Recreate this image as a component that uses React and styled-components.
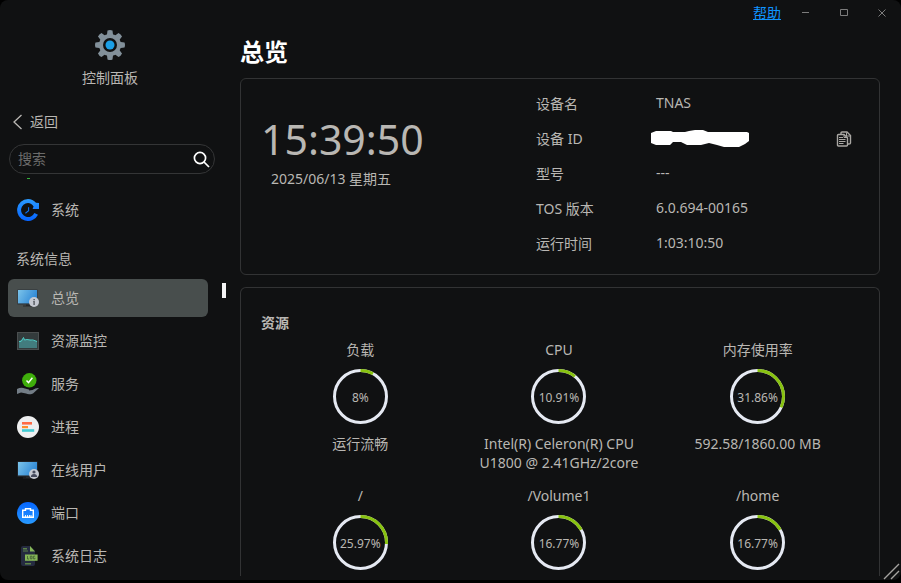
import React, { useState } from "react";
import styled, { createGlobalStyle } from "styled-components";

const GlobalStyle = createGlobalStyle`
  * {
    box-sizing: border-box;
  }
  body {
    margin: 0;
    background-color: #000;
    color: #b9b7b3;
    font-family: "Noto Sans", "Noto Sans CJK SC", sans-serif;
    font-size: 14px;
    line-height: 20px;
    overflow: hidden;
  }
  button, input {
    font: inherit;
    color: inherit;
    background: none;
    border: 0;
    padding: 0;
  }
  button {
    cursor: pointer;
  }
`;

const Window = styled.div`
  display: grid;
  grid-template-columns: 240px minmax(0, 1fr);
  height: calc(100vh - 3px);
  background-color: #101112;
  border-radius: 8px;
  overflow: hidden;
  position: relative;
`;

const Sidebar = styled.aside`
  display: flex;
  flex-direction: column;
  min-height: 0;
  padding: 30px 14px 0 8px;
`;

const AppHead = styled.div`
  display: flex;
  flex-direction: column;
  align-items: center;
  gap: 8px;
  width: 204px;
`;

const Back = styled.button`
  display: flex;
  align-items: center;
  gap: 8px;
  align-self: flex-start;
  margin: 24px 0 12px 5px;
`;

const Search = styled.label`
  display: flex;
  align-items: center;
  flex: none;
  width: 206px;
  height: 30px;
  margin-left: 1px;
  padding: 0 4px 0 8px;
  border: 1px solid #343536;
  border-radius: 15px;
  input {
    flex: 1;
    min-width: 0;
    outline: none;
  }
  input::placeholder {
    color: #6b6b6a;
    opacity: 1;
  }
`;

const NavScroll = styled.div`
  display: flex;
  justify-content: space-between;
  flex: 1;
  min-height: 0;
  margin-top: 4px;
  overflow: hidden;
`;

const Nav = styled.nav`
  display: flex;
  flex-direction: column;
  gap: 5px;
  width: 200px;
`;

const Clipped = styled.div`
  flex: none;
  width: 3px;
  height: 1px;
  margin: 0 0 7px 19px;
  background-color: #35b13c;
`;

const NavItem = styled.button`
  display: flex;
  align-items: center;
  flex: none;
  gap: 12px;
  height: 38px;
  padding-left: 9px;
  border-radius: 6px;
  background-color: ${({ $active }) => ($active ? "#484e4d" : "transparent")};
  svg {
    flex: none;
  }
`;

const NavTitle = styled.div`
  flex: none;
  padding: 15px 8px 5px;
`;

const Thumb = styled.div`
  width: 4px;
  height: 15px;
  margin-top: 105px;
  background-color: #f4f4f4;
`;

const Main = styled.main`
  display: flex;
  flex-direction: column;
  min-width: 0;
  min-height: 0;
  padding: 0 21px 4px 0;
`;

const TitleBar = styled.header`
  display: flex;
  align-items: center;
  justify-content: flex-end;
  flex: none;
  gap: 18px;
  height: 26px;
  margin-right: -9px;
  a {
    color: #0f94ff;
  }
`;

const WinButtons = styled.div`
  display: flex;
  gap: 24px;
`;

const WinButton = styled.button`
  display: grid;
  place-items: center;
  width: 14px;
  height: 14px;
  color: #7c7c7c;
`;

const PageTitle = styled.h1`
  margin: 8px 0;
  color: #fff;
  font-size: 24px;
  line-height: 36px;
  font-weight: 700;
`;

const Card = styled.section`
  border: 1px solid #323334;
  border-radius: 6px;
`;

const Device = styled(Card)`
  display: grid;
  grid-template-columns: 295fr 343fr;
  flex: none;
  margin-bottom: 12px;
  padding: 14px 0 20px;
`;

const Clock = styled.div`
  padding: 18px 0 0 20px;
  time {
    display: block;
    font-size: 41px;
    line-height: 56px;
  }
  p {
    margin: 0;
    padding: 2px 0 0 10px;
  }
`;

const Info = styled.dl`
  display: grid;
  grid-template-columns: 120px 1fr;
  row-gap: 15px;
  margin: 0;
  padding-top: 1px;
  dd {
    display: flex;
    align-items: center;
    justify-content: space-between;
    height: 18px;
    margin: 0;
    padding-right: 27px;
  }
`;

const CopyButton = styled.button`
  display: grid;
  place-items: center;
  padding-top: 2px;
`;

const Hidden = styled.svg`
  margin-left: -5px;
`;

const Resources = styled(Card)`
  flex: 1;
  min-height: 0;
  overflow: hidden;
  border-bottom: 0;
  border-radius: 6px 6px 0 0;
  padding: 25px 22px 0 20px;
  h2 {
    margin: 0 0 7px;
    font-size: 14px;
    line-height: 20px;
    font-weight: 700;
  }
`;

const Gauges = styled.div`
  display: grid;
  grid-template-columns: repeat(3, minmax(0, 1fr));
  row-gap: 14px;
`;

const GaugeCell = styled.div`
  display: flex;
  flex-direction: column;
  align-items: center;
  text-align: center;
  p {
    margin: 0;
    max-width: 170px;
    min-height: 38px;
    line-height: 19px;
  }
`;

const Ring = styled.div`
  display: grid;
  place-items: center;
  margin: 9px 0 10px;
  > * {
    grid-area: 1 / 1;
  }
  span {
    font-size: 12px;
    line-height: 16px;
    padding-top: 2px;
  }
`;

const Grip = styled.svg`
  position: absolute;
  right: 0;
  bottom: 0;
`;

function GearIcon() {
  return (
    <svg width="30" height="30" viewBox="0 0 30 30">
      <g fill="#82909a">
        {[0, 45, 90, 135].map((a) => (
          <path
            key={a}
            d="M12.5 0.5Q15 -0.5 17.5 0.5L18.2 6H11.8ZM11.8 24H18.2L17.5 29.5Q15 30.5 12.5 29.5Z"
            transform={`rotate(${a} 15 15)`}
          />
        ))}
        <circle cx="15" cy="15" r="11" />
      </g>
      <circle cx="15" cy="15" r="7" fill="#101112" />
      <circle cx="15" cy="15" r="4.5" fill="#1b9fe6" />
    </svg>
  );
}

function SystemIcon() {
  return (
    <svg width="22" height="22" viewBox="0 0 22 22">
      <defs>
        <linearGradient id="sys" x1="0" y1="0" x2="0" y2="1">
          <stop offset="0" stopColor="#2a9bff" />
          <stop offset="1" stopColor="#0563ff" />
        </linearGradient>
      </defs>
      <path
        fill="url(#sys)"
        d="M11 0C14.2 0 17 1.4 19 3.8L22 4V10H15.6L16.6 7.4C15.2 5.4 13.4 4 11 4A7 7 0 1 0 17.4 14L21 15.8A11 11 0 1 1 11 0Z"
      />
      <path d="M11.6 8.2V11.8L8.4 14.2" stroke="#0b6ff2" strokeWidth="1.1" fill="none" />
    </svg>
  );
}

function MonitorIcon({ user }) {
  const id = user ? "monUser" : "monInfo";
  return (
    <svg width="22" height="22" viewBox="0 0 22 22">
      <defs>
        <linearGradient id={id} x1="0" y1="0" x2="1" y2="0.4">
          <stop offset="0" stopColor="#7cc4ea" />
          <stop offset="1" stopColor="#3089d6" />
        </linearGradient>
      </defs>
      <rect x="0.5" y="2.5" width="20" height="15" fill="#2c3338" />
      <rect x="1" y="3" width="19" height="13.4" fill={`url(#${id})`} />
      <path d="M9 17.5H13V18.6H9ZM6 18.6H15V19.4H6Z" fill="#26292b" />
      <circle cx="17" cy="15" r="5" fill="#c5c9d1" />
      {user ? (
        <>
          <circle cx="17" cy="13" r="1.6" fill="#454a5c" />
          <path d="M13.8 18Q14 15 17 15Q20 15 20.2 18Z" fill="#454a5c" />
        </>
      ) : (
        <path d="M16.4 12H17.9V13.2H16.4ZM16.2 14H17.8V18H16.4V15H16.2Z" fill="#555a60" />
      )}
    </svg>
  );
}

function MonitorChartIcon() {
  return (
    <svg width="22" height="22" viewBox="0 0 22 22">
      <rect x="0.5" y="2.5" width="21" height="17" fill="#333b3c" stroke="#4a4e4f" />
      <path d="M2 11L4 10L6 8L8 10L12 9.5L16 10.5L20 11V18H2Z" fill="#427c7e" />
      <path
        d="M2 11.5L4 11.5L5.5 9.5L6.5 7.5L7.5 10L10 9.5L13 10L16 10L20 11.5"
        fill="none"
        stroke="#4ecdc6"
      />
    </svg>
  );
}

function ServiceIcon() {
  return (
    <svg width="22" height="22" viewBox="0 0 22 22">
      <circle cx="12.3" cy="7.3" r="7.2" fill="#3fae0b" />
      <path d="M9.5 7.6L11.5 9.7L15.4 4.8" fill="none" stroke="#fff" strokeWidth="1.5" />
      <path
        d="M0 16Q4 14 8 15.5L11 16.2Q13 16.4 12 17.4L15.5 17Q19 14.5 22 15L16 20.4Q12 22 9 20.6L4 19.6L0 21Z"
        fill="#737d86"
      />
    </svg>
  );
}

function ProcessIcon() {
  return (
    <svg width="22" height="22" viewBox="0 0 22 22">
      <circle cx="11" cy="11" r="11" fill="#eeeff0" />
      <path d="M5 6H15V8.6H5Z" fill="#ff6b45" />
      <path d="M5 10H11V12.2H5Z" fill="#ff8d2a" />
      <path d="M5 13.2H17.2V15.8H5Z" fill="#41cbd3" />
    </svg>
  );
}

function PortIcon() {
  return (
    <svg width="22" height="22" viewBox="0 0 22 22">
      <defs>
        <linearGradient id="port" x1="0" y1="0" x2="0" y2="1">
          <stop offset="0" stopColor="#0566ff" />
          <stop offset="1" stopColor="#289aff" />
        </linearGradient>
      </defs>
      <circle cx="11" cy="11" r="11" fill="url(#port)" />
      <path
        d="M5.7 15.3V8.2H8.5V6.7H13.5V8.2H16.3V15.3Z"
        fill="none"
        stroke="#fff"
        strokeWidth="1.4"
      />
      <path d="M8.5 13V15M10.5 13V15M12.5 13V15M14 13V15" stroke="#fff" strokeWidth="0.9" />
    </svg>
  );
}

function LogIcon() {
  return (
    <svg width="22" height="22" viewBox="0 0 22 22">
      <path d="M6 1H13L18 6V19Q18 21 16 21H6Q4 21 4 19V3Q4 1 6 1Z" fill="#252b40" />
      <path d="M13 1L18 6.6H13Z" fill="#86b757" />
      <path d="M6 3H10V4.4H6ZM6 5.6H11V6.6H6ZM8 18H14V19.4H8Z" fill="#5c8248" />
      <rect x="8" y="9.5" width="12.6" height="6.3" fill="#86b757" />
      <path
        d="M10.5 11V14H12M13.3 11.2H15V13.8H13.3ZM18.2 11.2H16.4V13.8H18V12.7"
        fill="none"
        stroke="#3d5a34"
        strokeWidth="0.8"
      />
    </svg>
  );
}

function CopyIcon() {
  return (
    <svg width="16" height="16" viewBox="0 0 16 16" fill="none" stroke="#a9a7a3">
      <path d="M5 3V2Q5 1 6 1H11L14.5 4.5V12Q14.5 13 13 13H12" strokeWidth="1.4" />
      <path d="M2.5 3.5H8L11.5 7V14Q11.5 15 10.5 15H2.5Q1.5 15 1.5 14V4.5Q1.5 3.5 2.5 3.5Z" strokeWidth="1.4" />
      <path d="M3 6.5H7M3 8.5H9.5M3 10.5H9.5M3 12.5H7.5" />
      <path d="M8 3.5V6.5H11.5M10.5 1.5V5H14.5" />
    </svg>
  );
}

const menu = [
  { label: "总览", icon: <MonitorIcon /> },
  { label: "资源监控", icon: <MonitorChartIcon /> },
  { label: "服务", icon: <ServiceIcon /> },
  { label: "进程", icon: <ProcessIcon /> },
  { label: "在线用户", icon: <MonitorIcon user /> },
  { label: "端口", icon: <PortIcon /> },
  { label: "系统日志", icon: <LogIcon /> },
];

const gauges = [
  { name: "负载", value: 8, note: "运行流畅" },
  { name: "CPU", value: 10.91, note: "Intel(R) Celeron(R) CPU U1800 @ 2.41GHz/2core" },
  { name: "内存使用率", value: 31.86, note: "592.58/1860.00 MB" },
  { name: "/", value: 25.97 },
  { name: "/Volume1", value: 16.77 },
  { name: "/home", value: 16.77 },
];

function Gauge({ name, value, note }) {
  return (
    <GaugeCell>
      <div>{name}</div>
      <Ring>
        <svg width="55" height="55" viewBox="0 0 55 55" fill="none" strokeWidth="3">
          <circle cx="27.5" cy="27.5" r="26" stroke="#e5e9f2" />
          <circle
            cx="27.5"
            cy="27.5"
            r="26"
            stroke="#88c210"
            pathLength="100"
            strokeDasharray={`${value} 100`}
            transform="rotate(-90 27.5 27.5)"
          />
        </svg>
        <span>{value}%</span>
      </Ring>
      <p>{note}</p>
    </GaugeCell>
  );
}

function App() {
  const [active, setActive] = useState("总览");

  return (
    <>
      <GlobalStyle />
      <Window lang="zh-CN">
        <Sidebar>
          <AppHead>
            <GearIcon />
            <div>控制面板</div>
          </AppHead>
          <Back>
            <svg width="9" height="16" viewBox="0 0 9 16" fill="none" stroke="#b9b7b3" strokeWidth="1.3">
              <path d="M8.5 1L1 8L8.5 15" />
            </svg>
            返回
          </Back>
          <Search>
            <input type="text" placeholder="搜索" aria-label="搜索" />
            <svg width="17" height="17" viewBox="0 0 17 17" fill="none" stroke="#fff" strokeWidth="1.7">
              <circle cx="7" cy="7" r="5.6" />
              <path d="M11 11L16 16" />
            </svg>
          </Search>
          <NavScroll>
            <Nav>
              <Clipped />
              <NavItem $active={active === "系统"} onClick={() => setActive("系统")}>
                <SystemIcon />
                系统
              </NavItem>
              <NavTitle>系统信息</NavTitle>
              {menu.map(({ label, icon }) => (
                <NavItem key={label} $active={active === label} onClick={() => setActive(label)}>
                  {icon}
                  {label}
                </NavItem>
              ))}
            </Nav>
            <Thumb />
          </NavScroll>
        </Sidebar>

        <Main>
          <TitleBar>
            <a href="#help">帮助</a>
            <WinButtons>
              <WinButton aria-label="最小化">
                <svg width="8" height="8" stroke="currentColor">
                  <path d="M0 3.5H7" />
                </svg>
              </WinButton>
              <WinButton aria-label="最大化">
                <svg width="8" height="8" stroke="currentColor" fill="none">
                  <path d="M0.5 0.5H7.5V6.5H0.5Z" />
                </svg>
              </WinButton>
              <WinButton aria-label="关闭">
                <svg width="8" height="8" stroke="currentColor">
                  <path d="M0.5 0.5L7.5 7.5M7.5 0.5L0.5 7.5" />
                </svg>
              </WinButton>
            </WinButtons>
          </TitleBar>
          <PageTitle>总览</PageTitle>

          <Device>
            <Clock>
              <time>15:39:50</time>
              <p>2025/06/13 星期五</p>
            </Clock>
            <Info>
              <dt>设备名</dt>
              <dd>TNAS</dd>
              <dt>设备 ID</dt>
              <dd>
                <Hidden width="98" height="18" viewBox="0 0 98 18">
                  <path
                    d="M0 4L5 2H20L22 3H34L38 2L44 1H52L57 3H70L76 3H96L98 4V12L94 15L88 18H73L66 16L58 14L50 16H36L30 13H22L19 16H5L0 14Z"
                    fill="#fff"
                  />
                </Hidden>
                <CopyButton aria-label="复制">
                  <CopyIcon />
                </CopyButton>
              </dd>
              <dt>型号</dt>
              <dd>---</dd>
              <dt>TOS 版本</dt>
              <dd>6.0.694-00165</dd>
              <dt>运行时间</dt>
              <dd>1:03:10:50</dd>
            </Info>
          </Device>

          <Resources>
            <h2>资源</h2>
            <Gauges>
              {gauges.map((g) => (
                <Gauge key={g.name} {...g} />
              ))}
            </Gauges>
          </Resources>
        </Main>

        <Grip width="18" height="18" viewBox="0 0 18 18" stroke="#a5a3a0" strokeWidth="1.4">
          <path d="M1 17L16 2M8 17L16 9" />
        </Grip>
      </Window>
    </>
  );
}

export default App;
